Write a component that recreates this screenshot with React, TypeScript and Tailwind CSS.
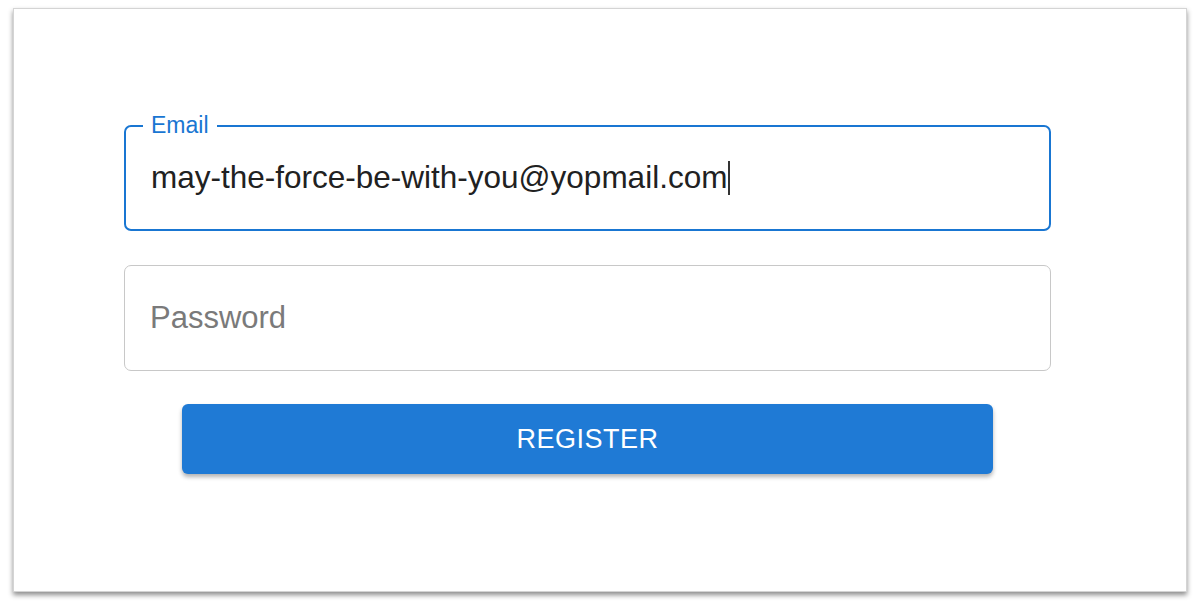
import React from "react";

const font = { fontFamily: '"Liberation Sans", Arial, sans-serif' };

function OutlinedField({ label, value, focused }: { label: string; value?: string; focused?: boolean }) {
  return (
    <div
      className={
        "relative flex items-center h-[106px] w-[927px] rounded-[7px] pl-[25px] " +
        (focused ? "border-2 border-[#1976d2]" : "border-[1.5px] border-[#c8c8c8]")
      }
    >
      {focused && (
        <span className="absolute -top-[16px] left-[17px] bg-white px-[8px] text-[23px] leading-[28px] text-[#1976d2]">
          {label}
        </span>
      )}
      {value ? (
        <div className="flex items-center text-[31.5px] text-[#212121]">
          <span>{value}</span>
          <span className="ml-[1px] h-[34px] w-[2px] bg-[#333]" />
        </div>
      ) : (
        <span className="text-[31px] text-[#7a7a7a]">{label}</span>
      )}
    </div>
  );
}

export default function App() {
  return (
    <div className="h-[611px] w-[1200px] bg-white pl-[13px] pt-[8px]" style={font}>
      <div className="h-[584px] w-[1174px] border border-[#d4d4d4] bg-white pl-[110px] pt-[116px] shadow-[0_3px_5px_rgba(0,0,0,0.45)]">
        <div className="flex w-[927px] flex-col gap-[34px]">
          <OutlinedField label="Email" value="may-the-force-be-with-you@yopmail.com" focused />
          <OutlinedField label="Password" />
        </div>
        <div className="mt-[33px] w-[927px] px-[58px]">
          <button className="h-[70px] w-full rounded-[6px] bg-[#1f7ad5] text-[27px] tracking-[0.5px] text-white shadow-[0_3px_4px_rgba(0,0,0,0.3)]">
            REGISTER
          </button>
        </div>
      </div>
    </div>
  );
}
